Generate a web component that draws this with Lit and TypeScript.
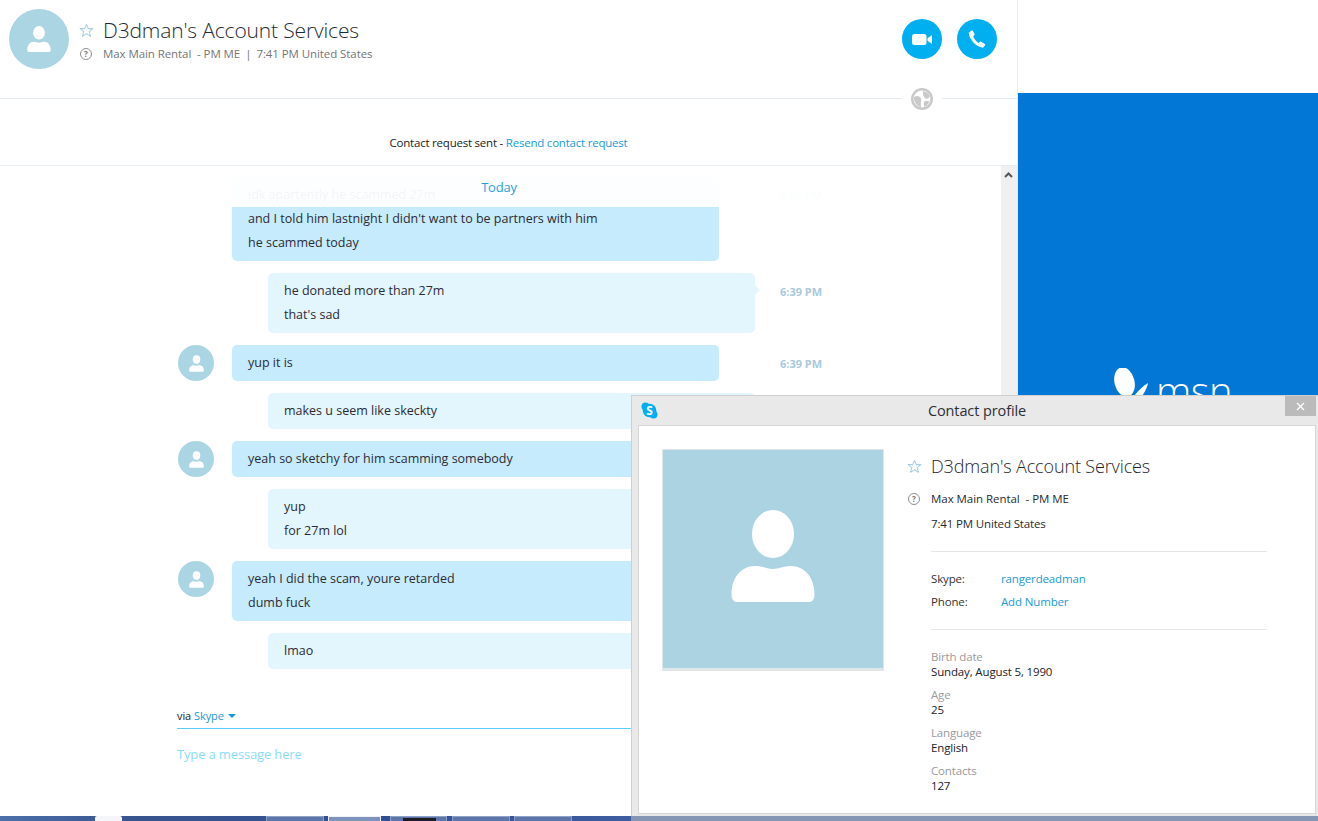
import { LitElement, html, css } from "lit";
import { customElement } from "lit/decorators.js";

const person = (cls: string) => html`<svg class=${cls} viewBox="0 0 84 92" aria-hidden="true">
  <ellipse cx="42" cy="24" rx="21" ry="24" fill="#fff"></ellipse>
  <path fill="#fff" d="M0.5 84C0.500 68 10 56 24 56C32 56 36 59 42 59C48 59 52 56 60 56C74 56 83.500 68 83.500 84Q83.500 92 78 92L6 92Q.5 92 .5 84Z"></path>
</svg>`;

const star = (cls: string) => html`<svg class=${cls} viewBox="0 0 16 16" aria-hidden="true">
  <path fill="none" stroke="#a6cfe1" stroke-width="1.100" stroke-linejoin="round" d="M8 1.500L9.900 6H14.800L10.900 9.100L12.300 14.200L8 11.300L3.700 14.200L5.100 9.100L1.200 6H6.100Z"></path>
</svg>`;

interface Msg { who: "them" | "me"; lines: string[]; time?: string; avatar?: boolean; }

const MESSAGES: Msg[] = [
  { who: "them", lines: ["idk apartently he scammed 27m", "and I told him lastnight I didn't want to be partners with him", "he scammed today"], time: "6:39 PM" },
  { who: "me", lines: ["he donated more than 27m", "that's sad"], time: "6:39 PM" },
  { who: "them", avatar: true, lines: ["yup it is"], time: "6:39 PM" },
  { who: "me", lines: ["makes u seem like skeckty"], time: "6:39 PM" },
  { who: "them", avatar: true, lines: ["yeah so sketchy for him scamming somebody"], time: "6:40 PM" },
  { who: "me", lines: ["yup", "for 27m lol"], time: "6:40 PM" },
  { who: "them", avatar: true, lines: ["yeah I did the scam, youre retarded", "dumb fuck"], time: "6:40 PM" },
  { who: "me", lines: ["lmao"], time: "6:40 PM" },
];

const TABS = [
  { w: 58, gap: 4 }, { w: 53, gap: 9, active: true }, { w: 57, gap: 5 }, { w: 58, gap: 4 }, { w: 58, gap: 0 },
];

@customElement("app-root")
export class AppRoot extends LitElement {
  static styles = css`
    :host { display: block; position: relative; width: 1318px; height: 821px; overflow: hidden; background: #fff;
      font-family: "Open Sans", "Noto Sans", sans-serif; font-size: 12px; color: #222; }
    * { box-sizing: border-box; }
    .top { display: flex; height: 816px; }
    .chat { width: 1018px; border-right: 1px solid #e6ebee; display: flex; flex-direction: column; flex: none; }

    .header { height: 99px; border-bottom: 1px solid #e3eaef; display: flex; position: relative; padding: 9px 20px 0 9px; flex: none; }
    .avatar-lg { width: 60px; height: 60px; border-radius: 50%; background: #acd5e4; display: flex; align-items: center; justify-content: center; flex: none; }
    .avatar-lg svg { width: 24px; height: 26px; }
    .head-info { margin-left: 10px; flex: 1; display: grid; grid-template-columns: 24px 1fr; grid-auto-rows: min-content; padding-top: 6px; align-items: center; }
    .star-sm { width: 15px; height: 15px; display: block; }
    .name { font-size: 21px; font-weight: 300; line-height: 30px; letter-spacing: -0.15px; color: #1f2b33; white-space: nowrap; }
    .q { width: 12px; height: 12px; border: 1px solid #8f8f8f; border-radius: 50%; display: flex; align-items: center; justify-content: center; font-size: 8px; line-height: 1; color: #777; margin-left: 1px; font-weight: 700; }
    .status { font-size: 11.500px; line-height: 18px; color: #767676; white-space: nowrap; letter-spacing: -0.08px; }
    .status i { font-style: normal; margin: 0 5px; }
    .actions { display: flex; gap: 15px; padding-top: 10px; flex: none; }
    .call { width: 40px; height: 40px; border-radius: 50%; background: #00aff0; display: flex; align-items: center; justify-content: center; }
    .globe { position: absolute; left: 902px; top: 88px; width: 40px; height: 22px; background: #fff; display: flex; justify-content: center; }
    .globe svg { width: 22px; height: 22px; }

    .notice { height: 67px; flex: none; border-bottom: 1px solid #e8eef1; display: flex; align-items: center; justify-content: center; padding-top: 21px; font-size: 11.500px; letter-spacing: -0.22px; color: #1c1c1c; }
    a { color: #1b9ad6; text-decoration: none; }

    .thread-wrap { flex: 1; display: flex; min-height: 0; }
    .thread-main { flex: 1; display: flex; flex-direction: column; position: relative; min-width: 0; }
    .today { position: absolute; left: 0; right: 0; top: 0; height: 41px; display: flex; justify-content: center; padding: 12px 3px 0 0; font-size: 13px; line-height: 18px; color: #2b9fdb; letter-spacing: -0.2px; background: rgba(255,255,255,.95); }
    .messages { flex: 1; padding: 11px 0 0 178px; display: flex; flex-direction: column; gap: 12px; }
    .row { display: grid; grid-template-columns: 36px 523px 60px; column-gap: 18px; width: 660px; }
    .row .time { margin-left: 7px; padding-top: 11px; font-size: 11px; line-height: 16px; font-weight: 700; color: #aacadb; white-space: nowrap; }
    .avatar { width: 36px; height: 36px; border-radius: 50%; background: #acd5e4; display: flex; align-items: center; justify-content: center; }
    .avatar svg { width: 15px; height: 17px; }
    .bubble { width: 487px; padding: 6px 16px; border-radius: 5px; font-size: 12.500px; line-height: 24px; letter-spacing: 0; color: #2b2b36; position: relative; }
    .bubble.them { background: #c6ebfc; justify-self: start; }
    .bubble.me { background: #e3f5fd; justify-self: end; }
    .bubble.me::after { content: ""; position: absolute; right: -5px; top: 12px; border-left: 5px solid #e3f5fd; border-top: 5px solid transparent; border-bottom: 5px solid transparent; }
    .bubble div { white-space: nowrap; }

    .composer { height: 116px; flex: none; padding-left: 177px; }
    .via { height: 29px; border-bottom: 1px solid #5bcdf5; display: flex; align-items: center; gap: 3px; padding-top: 2px; font-size: 11px; letter-spacing: -0.1px; color: #222; }
    .caret { width: 0; height: 0; border-left: 4px solid transparent; border-right: 4px solid transparent; border-top: 4px solid #0f9bd7; margin-left: 1px; margin-top: 2px; }
    .placeholder { margin-top: 15px; font-size: 13px; line-height: 20px; color: #8bdcf8; letter-spacing: -0.15px; }

    .scrollbar { width: 16px; background: #f0f0f0; flex: none; display: flex; justify-content: center; padding: 6px 2px 0 0; }
    .scrollbar svg { width: 9px; height: 6px; }

    .side { flex: 1; display: flex; flex-direction: column; }
    .side-top { height: 93px; flex: none; }
    .ad { flex: 1; background: #0277d6; padding: 275px 0 0 96px; display: flex; align-items: flex-start; color: #fff; overflow: hidden; }
    .ad svg { width: 36px; height: 40px; flex: none; }
    .ad span { font-size: 40px; line-height: 40px; font-weight: 300; margin: 3px 0 0 6px; letter-spacing: -0.5px; }

    .taskbar { height: 5px; display: flex; }
    .task-left { width: 631px; flex: none; background: linear-gradient(90deg, #4c70aa 0, #38558f 20%, #324f92 60%, #3d5da0 100%); display: flex; position: relative; }
    .task-right { flex: 1; background: #8596b5; }
    .start { position: absolute; left: 95px; top: 0; width: 27px; height: 5px; background: #f4f6fa; border-radius: 2px 2px 0 0; }
    .tabs { margin-left: 266px; display: flex; }
    .tab { height: 5px; border: 1px solid #8da0c6; border-bottom: 0; background: #5d77ab; position: relative; }
    .tab.active { background: #7f92bb; border-color: #eef1f7; }
    .tab b { position: absolute; left: 12px; top: 1px; width: 33px; height: 4px; background: #1e1e22; }

    .window { position: absolute; left: 631px; top: 395px; width: 687px; height: 421px; background: #e9e9e9; border-left: 1px solid #cfcfcf; border-top: 1px solid #cfcfcf; padding: 0 2px 2px 6px; display: flex; flex-direction: column; }
    .titlebar { height: 29px; flex: none; display: flex; align-items: center; justify-content: center; position: relative; font-size: 14.500px; color: #2b3036; letter-spacing: -0.1px; }
    .skype { position: absolute; left: 3px; top: 6px; width: 17px; height: 17px; }
    .close { position: absolute; right: 0; top: 0; width: 31px; height: 20px; background: #bbb; display: flex; align-items: center; justify-content: center; }
    .close svg { width: 9px; height: 9px; }
    .body { flex: 1; background: #fff; border: 1px solid #d6d6d6; padding: 23px 0 0 23px; display: flex; min-height: 0; }
    .picture { width: 222px; height: 222px; flex: none; background: #acd3e2; border: 1px solid #dfe6ea; border-bottom-width: 3px; display: flex; align-items: center; justify-content: center; padding-bottom: 7px; }
    .picture svg { width: 84px; height: 92px; }
    .info { margin-left: 23px; width: 360px; display: grid; grid-template-columns: 24px 336px; grid-auto-rows: min-content; align-items: center; align-content: start; }
    .star-md { width: 15px; height: 15px; display: block; }
    .p-name { margin-top: 4px; font-size: 18px; font-weight: 300; line-height: 26px; color: #1f272d; white-space: nowrap; letter-spacing: -0.14px; }
    .star-cell { margin-top: 4px; }
    .p-line { font-size: 11.500px; line-height: 25px; color: #262b30; letter-spacing: -0.15px; white-space: nowrap; }
    .p-line.tight { letter-spacing: -0.05px; }
    .p-first { margin-top: 7px; }
    .q-cell { margin-top: 7px; }
    .divider { grid-column: 2; height: 1px; background: #e6e6e6; margin: 15px 0 0; }
    .kv { grid-column: 2; display: grid; grid-template-columns: 70px 1fr; font-size: 11.500px; line-height: 23px; letter-spacing: -0.15px; color: #333; padding: 15px 0 1px; }
    .details { grid-column: 2; padding-top: 19px; display: flex; flex-direction: column; gap: 8px; font-size: 11.500px; line-height: 15px; letter-spacing: -0.15px; }
    .details small { display: block; font-size: inherit; color: #9a9a9e; }
    .details span { color: #20242a; }
    .sp { grid-column: 1; }
  `;

  render() {
    return html`
      <div class="top">
        <section class="chat">
          <header class="header">
            <div class="avatar-lg">${person("")}</div>
            <div class="head-info">
              ${star("star-sm")}
              <div class="name">D3dman's Account Services</div>
              <span class="q">?</span>
              <div class="status">Max Main Rental&nbsp; - PM ME<i>|</i>7:41 PM United States</div>
            </div>
            <div class="actions">
              <div class="call"><svg width="20" height="11" viewBox="0 0 20 11"><rect width="14.500" height="11" rx="2.500" fill="#fff"></rect><path fill="#fff" d="M15.500 4.200L20 1V10L15.500 6.800Z"></path></svg></div>
              <div class="call"><svg width="20" height="20" viewBox="0 0 20 20"><path fill="#fff" d="M2.300 3.300L4.600 1.600C5.100 1.300 5.600 1.400 5.900 1.900L7.600 5C7.800 5.400 7.800 5.800 7.500 6.100L6.200 7.500C6.800 9 8.800 12.300 11.400 13.900L13 12.800C13.400 12.500 13.800 12.600 14.100 12.800L17.800 14.900C18.300 15.200 18.400 15.800 18.100 16.200L16.700 18C16.300 18.500 15.700 18.700 15 18.600C8 17 3 10.500 1.800 4.700C1.700 4.100 1.900 3.600 2.300 3.300Z"></path></svg></div>
            </div>
            <div class="globe"><svg viewBox="0 0 22 22">
              <circle cx="11" cy="11" r="11" fill="#c9c9c9"></circle>
              <circle cx="11" cy="11" r="8.500" fill="#fff"></circle>
              <path fill="#c9c9c9" d="M12 3C15 3.500 18 5.500 19 8.500C18 10 16 11 14.500 10.500C13 9 11.500 7.500 12 3ZM3 9C5 8 7 7.500 8 8.500C10 10 11 11 10 13C9.500 15 10 17 10 19.500C7 18.500 3.500 15 3 11ZM14 13C16 13 17.500 13 18.500 13.500C17.500 16 15.500 18 13.500 19C12.500 17 12.500 14.500 14 13Z"></path>
            </svg></div>
          </header>
          <div class="notice"><span>Contact request sent - <a href="#">Resend contact request</a></span></div>
          <div class="thread-wrap">
            <div class="thread-main">
              <div class="messages">
                ${MESSAGES.map(m => html`
                  <div class="row">
                    <div>${m.avatar ? html`<div class="avatar">${person("")}</div>` : ""}</div>
                    <div class="bubble ${m.who}">${m.lines.map(l => html`<div>${l}</div>`)}</div>
                    <div class="time">${m.time}</div>
                  </div>`)}
              </div>
              <div class="today">Today</div>
              <div class="composer">
                <div class="via"><span>via</span><a href="#">Skype</a><span class="caret"></span></div>
                <div class="placeholder">Type a message here</div>
              </div>
            </div>
            <div class="scrollbar"><svg viewBox="0 0 9 6"><path d="M1 5L4.500 1.500L8 5" fill="none" stroke="#555" stroke-width="2"></path></svg></div>
          </div>
        </section>
        <aside class="side">
          <div class="side-top"></div>
          <div class="ad">
            <svg viewBox="0 0 36 40"><ellipse cx="10.500" cy="14" rx="10" ry="15" fill="#fff" transform="rotate(-14 10.500 14)"></ellipse><path fill="#fff" d="M20 28C24 23 29 18 34 15C33 21 28 30 22 34Z"></path></svg>
            <span>msn</span>
          </div>
        </aside>
      </div>
      <footer class="taskbar">
        <div class="task-left">
          <div class="start"></div>
          <div class="tabs">
            ${TABS.map((t, i) => html`<div class="tab ${t.active ? "active" : ""}" style="width:${t.w}px;margin-right:${t.gap}px">${i === 2 ? html`<b></b>` : ""}</div>`)}
          </div>
        </div>
        <div class="task-right"></div>
      </footer>

      <div class="window">
        <div class="titlebar">
          <svg class="skype" viewBox="0 0 17 17">
            <circle cx="8.500" cy="8.500" r="6.800" fill="#00aff0"></circle>
            <circle cx="4.500" cy="4.500" r="4" fill="#00aff0"></circle>
            <circle cx="12.500" cy="12.500" r="4" fill="#00aff0"></circle>
            <text x="8.500" y="12.600" text-anchor="middle" font-size="12" font-weight="700" fill="#fff" font-family="Open Sans, sans-serif">S</text>
          </svg>
          Contact profile
          <div class="close"><svg viewBox="0 0 9 9"><path d="M1 1L8 8M8 1L1 8" stroke="#fff" stroke-width="1.300"></path></svg></div>
        </div>
        <div class="body">
          <div class="picture">${person("")}</div>
          <div class="info">
            <div class="star-cell">${star("star-md")}</div>
            <div class="p-name">D3dman's Account Services</div>
            <div class="q-cell"><span class="q">?</span></div>
            <div class="p-line tight p-first">Max Main Rental&nbsp; - PM ME</div>
            <div class="sp"></div>
            <div class="p-line">7:41 PM United States</div>
            <div class="divider"></div>
            <div class="kv">
              <span>Skype:</span><a href="#">rangerdeadman</a>
              <span>Phone:</span><a href="#">Add Number</a>
            </div>
            <div class="divider"></div>
            <div class="details">
              <div><small>Birth date</small><span>Sunday, August 5, 1990</span></div>
              <div><small>Age</small><span>25</span></div>
              <div><small>Language</small><span>English</span></div>
              <div><small>Contacts</small><span>127</span></div>
            </div>
          </div>
        </div>
      </div>
    `;
  }
}
